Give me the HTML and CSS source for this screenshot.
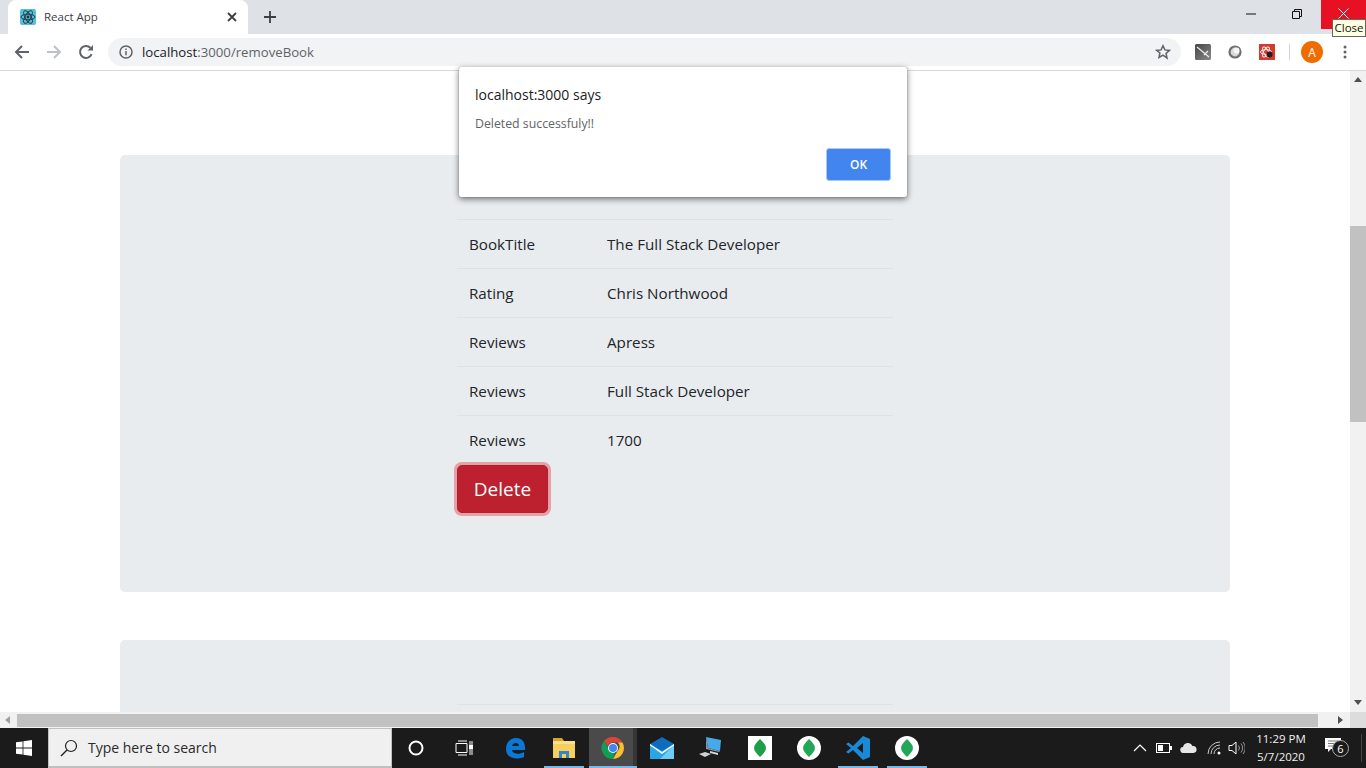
FILE: index.html
```html
<!DOCTYPE html>
<html lang="en">
  <head>
    <meta charset="UTF-8" />
    <title>React App</title>
    <link rel="stylesheet" href="styles.css">
  </head>
  <body>
    <div class="tabstrip">
      <div class="tab">
        <svg class="favicon" width="16" height="16" viewBox="0 0 16 16">
          <rect width="16" height="16" rx="2" fill="#53c1de"/>
          <g fill="none" stroke="#24323a" stroke-width="0.9">
            <ellipse cx="8" cy="8" rx="7" ry="2.8"/>
            <ellipse cx="8" cy="8" rx="7" ry="2.8" transform="rotate(60 8 8)"/>
            <ellipse cx="8" cy="8" rx="7" ry="2.8" transform="rotate(120 8 8)"/>
          </g>
          <circle cx="8" cy="8" r="1.4" fill="#24323a"/>
        </svg>
        <span class="tab-title">React App</span>
        <svg class="tab-close" width="10" height="10" viewBox="0 0 10 10"><path d="M1 1l8 8M9 1l-8 8" stroke="#3c4043" stroke-width="1.8"/></svg>
      </div>
      <svg class="new-tab" width="12" height="12" viewBox="0 0 12 12"><path d="M6 0v12M0 6h12" stroke="#3c4043" stroke-width="1.8"/></svg>
      <div class="win-controls">
        <div class="win-btn"><svg width="10" height="10" viewBox="0 0 10 10"><path d="M0 5h10" stroke="#111" stroke-width="1"/></svg></div>
        <div class="win-btn"><svg width="10" height="10" viewBox="0 0 10 10"><path d="M.5 2.5h7v7h-7zM2.500 2.500v-2h7v7h-2" fill="none" stroke="#111" stroke-width="1"/></svg></div>
        <div class="win-btn win-close"><svg width="11" height="11" viewBox="0 0 11 11"><path d="M.5.5l10 10M10.500.5l-10 10" stroke="#fff" stroke-width="1"/></svg></div>
      </div>
    </div>

    <div class="toolbar">
      <svg class="nav-icon" width="16" height="16" viewBox="0 0 16 16"><path d="M15 8H2M8 2L2 8l6 6" fill="none" stroke="#5f6368" stroke-width="2"/></svg>
      <svg class="nav-icon" width="16" height="16" viewBox="0 0 16 16"><path d="M1 8h13M8 2l6 6-6 6" fill="none" stroke="#bdc1c6" stroke-width="2"/></svg>
      <svg class="nav-icon" width="16" height="16" viewBox="0 0 16 16"><path d="M13.600 10.200A6 6 0 1 1 12.400 3.800" fill="none" stroke="#5f6368" stroke-width="2"/><path d="M9.500 6.500H15V1z" fill="#5f6368"/></svg>
      <div class="omnibox">
        <svg width="14" height="14" viewBox="0 0 14 14"><circle cx="7" cy="7" r="6" fill="none" stroke="#5f6368" stroke-width="1.5"/><path d="M7 6v4.200M7 3.400v1.500" stroke="#5f6368" stroke-width="1.5"/></svg>
        <span class="url"><span class="url-host">localhost</span>:3000/removeBook</span>
        <svg class="star" width="16" height="16" viewBox="0 0 16 16"><path d="M8 1.800l1.900 4.100 4.500.5-3.300 3.100.9 4.500L8 11.200l-4 2.300.9-4.500L1.600 6.400l4.500-.5z" fill="none" stroke="#5f6368" stroke-width="1.5"/></svg>
      </div>
      <div class="extensions">
        <svg width="16" height="16" viewBox="0 0 16 16">
          <defs><linearGradient id="ext-grey" x1="0" y1="0" x2="1" y2="1"><stop offset="0" stop-color="#444"/><stop offset="1" stop-color="#8a8a8a"/></linearGradient></defs>
          <rect width="16" height="16" rx="1.500" fill="url(#ext-grey)"/><path d="M2 3l12 10M9 11l4-4" stroke="#eee" stroke-width="1.200"/>
        </svg>
        <svg width="16" height="16" viewBox="0 0 16 16"><circle cx="8" cy="8" r="5.500" fill="#d8d8d8" stroke="#707070" stroke-width="2.200"/><circle cx="9.500" cy="6.500" r="3" fill="#f6f6f6"/></svg>
        <svg width="16" height="16" viewBox="0 0 16 16"><rect width="16" height="16" fill="#d5392f"/><g fill="none" stroke="#fbe3e0"><ellipse cx="7" cy="8" rx="5.500" ry="2.400"/><ellipse cx="7" cy="8" rx="5.500" ry="2.400" transform="rotate(60 7 8)"/><ellipse cx="7" cy="8" rx="5.500" ry="2.400" transform="rotate(120 7 8)"/></g><circle cx="10.500" cy="10.500" r="3" fill="#2b1a18"/></svg>
      </div>
      <div class="tb-sep"></div>
      <div class="avatar">A</div>
      <svg class="kebab" width="4" height="14" viewBox="0 0 4 14"><circle cx="2" cy="2" r="1.500" fill="#5f6368"/><circle cx="2" cy="7" r="1.500" fill="#5f6368"/><circle cx="2" cy="12" r="1.500" fill="#5f6368"/></svg>
    </div>

    <div class="viewport">
      <div class="page">
        <div class="jumbotron">
          <table class="book-table">
            <tr><td class="key">BookTitle</td><td>The Full Stack Developer</td></tr>
            <tr><td class="key">Rating</td><td>Chris Northwood</td></tr>
            <tr><td class="key">Reviews</td><td>Apress</td></tr>
            <tr><td class="key">Reviews</td><td>Full Stack Developer</td></tr>
            <tr><td class="key">Reviews</td><td>1700</td></tr>
          </table>
          <button class="btn-delete">Delete</button>
        </div>
        <div class="jumbotron">
          <table class="book-table">
            <tr><td class="key"></td><td></td></tr>
          </table>
        </div>
      </div>
      <div class="vscroll">
        <div class="arrow"></div>
        <div class="vtrack"><div class="vthumb"></div></div>
        <div class="arrow arrow-down"></div>
      </div>
    </div>

    <div class="hscroll">
      <div class="harrow"><div class="arrow-left"></div></div>
      <div class="hthumb"></div>
      <div class="harrow harrow-right"><div class="arrow-right"></div></div>
      <div class="corner"></div>
    </div>

    <div class="taskbar">
      <div class="start">
        <svg width="16" height="16" viewBox="0 0 16 16"><path d="M0 2.300l6.600-.9v6.200H0zM7.400 1.300L16 0v7.600H7.400zM0 8.400h6.600v6.200L0 13.700zM7.400 8.400H16V16l-8.600-1.300z" fill="#fff"/></svg>
      </div>
      <div class="search">
        <svg width="18" height="18" viewBox="0 0 18 18"><circle cx="11" cy="7" r="5.500" fill="none" stroke="#222" stroke-width="1.200"/><path d="M7 11l-6 6" stroke="#222" stroke-width="1.400"/></svg>
        <span>Type here to search</span>
      </div>
      <div class="sys-btn"><svg width="16" height="16" viewBox="0 0 16 16"><circle cx="8" cy="8" r="6.500" fill="none" stroke="#fff" stroke-width="2"/></svg></div>
      <div class="sys-btn"><svg width="18" height="16" viewBox="0 0 18 16"><path d="M1 3.500h11v9H1zM3 1h9M3 15h9M15 1v14M17 1v14" fill="none" stroke="#fff" stroke-width="1"/><rect x="14" y="5" width="4" height="4" fill="#fff"/></svg></div>
      <div class="apps">
        <div class="app">
          <svg width="24" height="24" viewBox="0 0 24 24"><path d="M3 13C3 6 8 2 13 2c6 0 9 4 9 10v2H9c.4 4 7 5 12 2v5c-7 3-18 2-18-8zm6-3h7c0-4-6-4-7 0z" fill="#0a78d7"/></svg>
        </div>
        <div class="app app-open">
          <svg width="24" height="24" viewBox="0 0 24 24"><path d="M1 2h9l2 3h-11z" fill="#d9a232"/><rect x="1" y="5" width="22" height="17" fill="#f6cf5f"/><rect x="1" y="5" width="22" height="3" fill="#fbe08a"/><path d="M7 22v-7h10v7h-3v-4h-4v4z" fill="#2f86c9"/></svg>
        </div>
        <div class="app app-open app-active">
          <svg width="24" height="24" viewBox="0 0 24 24">
            <path d="M12 1a11 11 0 0 1 9.500 5.500H12a5.500 5.500 0 0 0-5.200 3.700L3.200 4.800A11 11 0 0 1 12 1z" fill="#db4437"/>
            <path d="M21.500 6.500A11 11 0 0 1 12 23l4.700-8.200a5.500 5.500 0 0 0 .1-8.300z" fill="#fbc02d"/>
            <path d="M12 23A11 11 0 0 1 3.200 4.800l4.600 8.100a5.500 5.500 0 0 0 6.300 4.200z" fill="#0f9d58"/>
            <circle cx="12" cy="12" r="5" fill="#fff"/><circle cx="12" cy="12" r="4" fill="#4285f4"/>
          </svg>
        </div>
        <div class="app">
          <svg width="24" height="24" viewBox="0 0 24 24"><rect y="8" width="24" height="15" fill="#2aa5ea"/><path d="M0 8l12-7 12 7-12 7z" fill="#0f6cbd"/><path d="M24 9v14H10z" fill="#6fcbf5"/><path d="M0 8l12 8 12-8v1.500L12 18 0 9.500z" fill="#fff"/></svg>
        </div>
        <div class="app">
          <svg width="24" height="24" viewBox="0 0 24 24"><path d="M7 1l15 3-1 11-12-3z" fill="#45a9ea"/><path d="M7 1l2 11 12 3-1 1-13-3z" fill="#8a949b"/><path d="M11 15l8 2v2l-8-2z" fill="#cfd8dc"/><path d="M0 18l6-2 6 2-6 3z" fill="#cfd2d4"/></svg>
        </div>
        <div class="app">
          <div class="mongo-tile"><svg width="12" height="18" viewBox="0 0 12 18"><path d="M6 0c3 3 6 6 6 9s-3 6-6 9c-3-3-6-6-6-9s3-6 6-9z" fill="#1f9e4a"/></svg></div>
        </div>
        <div class="app">
          <div class="mongo-tile mongo-round"><svg width="12" height="18" viewBox="0 0 12 18"><path d="M6 0c3 3 6 6 6 9s-3 6-6 9c-3-3-6-6-6-9s3-6 6-9z" fill="#21a757"/></svg></div>
        </div>
        <div class="app app-open">
          <svg width="24" height="24" viewBox="0 0 24 24"><path d="M17 0l7 3v18l-7 3L7 14l-4.500 3.500L0 16l5-4-5-4 2.500-1.500L7 10zm0 7l-6 5 6 5z" fill="#1b8ad6"/></svg>
        </div>
        <div class="app app-open">
          <div class="mongo-tile mongo-round"><svg width="12" height="18" viewBox="0 0 12 18"><path d="M6 0c3 3 6 6 6 9s-3 6-6 9c-3-3-6-6-6-9s3-6 6-9z" fill="#21a757"/></svg></div>
        </div>
      </div>
      <div class="tray">
        <svg class="tray-chevron" width="14" height="8" viewBox="0 0 14 8"><path d="M1 7l6-6 6 6" fill="none" stroke="#fff" stroke-width="1.200"/></svg>
        <svg class="tray-battery" width="16" height="10" viewBox="0 0 16 10"><rect x=".5" y=".5" width="13" height="9" fill="none" stroke="#fff"/><rect x="2" y="2" width="5" height="6" fill="#fff"/><rect x="14" y="3" width="2" height="4" fill="#fff"/></svg>
        <svg class="tray-cloud" width="17" height="10" viewBox="0 0 17 10"><path d="M3.500 10a3 3 0 0 1-.5-6 5 5 0 0 1 9.500-1 3.500 3.500 0 0 1 1 7z" fill="#e6e6e6"/></svg>
        <svg class="tray-wifi" width="15" height="14" viewBox="0 0 15 14"><path d="M1 13A12 12 0 0 1 13 1M4 13a9 9 0 0 1 9-9M7 13a6 6 0 0 1 6-6" fill="none" stroke="#ccc" stroke-width="1"/><circle cx="12" cy="12" r="1.500" fill="#fff"/></svg>
        <svg class="tray-sound" width="17" height="14" viewBox="0 0 17 14"><path d="M1 4.500h3L8 1v12L4 9.500H1z" fill="none" stroke="#fff"/><path d="M10.500 4.500a4 4 0 0 1 0 5M13 2.500a7 7 0 0 1 0 9M15 1a9 9 0 0 1 0 12" fill="none" stroke="#999"/></svg>
        <div class="clock"><div>11:29 PM</div><div>5/7/2020</div></div>
        <div class="notify">
          <svg width="16" height="14" viewBox="0 0 16 14"><path d="M0 0h16v11H6l-3 3v-3H0z" fill="#fff"/><path d="M3 3h10M3 5.500h10M3 8h6" stroke="#777"/></svg>
          <span class="notify-badge">6</span>
        </div>
      </div>
    </div>

    <div class="tooltip">Close</div>

    <div class="alert">
      <div class="alert-title">localhost:3000 says</div>
      <div class="alert-msg">Deleted successfuly!!</div>
      <div class="alert-actions"><button class="alert-ok">OK</button></div>
    </div>
  </body>
</html>
```

FILE: styles.css
```css
* {
  box-sizing: border-box;
}
html,
body {
  margin: 0;
  height: 768px;
  overflow: hidden;
}
body {
  display: flex;
  flex-direction: column;
  background: #fff;
  font-family: "Open Sans", "Noto Sans", sans-serif;
  color: #212529;
}

/* browser chrome */
.tabstrip {
  height: 34px;
  flex: none;
  display: flex;
  align-items: flex-end;
  background: #dee1e6;
  padding-left: 8px;
}
.tab {
  width: 240px;
  height: 34px;
  display: flex;
  align-items: center;
  padding: 0 12px;
  background: #fff;
  border-radius: 8px 8px 0 0;
}
.tab-title {
  margin-left: 8px;
  margin-bottom: 2px;
  flex: 1;
  font-size: 11.5px;
  color: #3c4043;
}
.tab-close {
  margin-right: -1px;
}
.new-tab {
  margin: 0 0 11px 16px;
}
.win-controls {
  margin-left: auto;
  align-self: flex-start;
  display: flex;
}
.win-btn {
  width: 46px;
  height: 29px;
  display: flex;
  align-items: center;
  justify-content: center;
  padding: 0 2px 2px 0;
}
.win-close {
  width: 45px;
  padding-right: 0;
  background: #e81123;
}
.toolbar {
  height: 37px;
  flex: none;
  display: flex;
  align-items: center;
  padding-left: 14px;
  background: #fff;
  border-bottom: 1px solid #d6d8db;
}
.nav-icon {
  margin-right: 16px;
}
.omnibox {
  width: 1073px;
  height: 28px;
  margin-left: -2px;
  display: flex;
  align-items: center;
  padding: 0 10px 0 11px;
  background: #f1f3f4;
  border-radius: 14px;
}
.url {
  margin-left: 9px;
  flex: 1;
  font-size: 13.2px;
  color: #5f6368;
}
.url-host {
  color: #202124;
}
.extensions {
  display: flex;
  gap: 16px;
  margin-left: 14px;
}
.tb-sep {
  width: 1px;
  height: 16px;
  margin: 0 11px 0 14px;
  background: #d0d2d5;
}
.avatar {
  width: 22px;
  height: 22px;
  display: flex;
  align-items: center;
  justify-content: center;
  border-radius: 50%;
  background: #ef6c00;
  color: #fff;
  font-size: 12px;
}
.kebab {
  margin-left: 20px;
}

/* page */
.viewport {
  height: 641px;
  flex: none;
  display: flex;
}
.page {
  flex: 1;
  overflow: hidden;
  padding: 84px 120px 0;
}
.jumbotron {
  width: 1110px;
  height: 437px;
  padding: 64px 0 64px 337px;
  margin-bottom: 48px;
  background: #e9ecef;
  border-radius: 5px;
}
.book-table {
  width: 436px;
  border-collapse: collapse;
  font-size: 15.2px;
}
.book-table td {
  height: 49px;
  padding: 12px;
  line-height: 24px;
  border-top: 1px solid #dee2e6;
}
.book-table .key {
  width: 138px;
}
.btn-delete {
  display: block;
  width: 91px;
  height: 48px;
  padding: 0;
  border: 1px solid #b21f2d;
  border-radius: 5px;
  background: #bd2130;
  color: #fff;
  font-family: inherit;
  font-size: 19px;
  box-shadow: 0 0 0 3px rgba(225, 83, 97, 0.5);
}
.vscroll {
  width: 16px;
  display: flex;
  flex-direction: column;
  background: #f1f1f1;
}
.arrow {
  flex: none;
  width: 0;
  height: 0;
  margin: 6px 4px;
  border: 4px solid transparent;
  border-top: 0;
  border-bottom: 5px solid #505050;
}
.arrow-down {
  margin-bottom: 7px;
  transform: rotate(180deg);
}
.vtrack {
  flex: 1;
  padding-top: 138px;
}
.vthumb {
  height: 196px;
  background: #c1c1c1;
}
.hscroll {
  height: 16px;
  flex: none;
  display: flex;
  align-items: center;
  background: #f1f1f1;
}
.harrow {
  width: 17px;
  padding-right: 2px;
  display: flex;
  justify-content: center;
}
.harrow-right {
  margin-left: 15px;
}
.arrow-left,
.arrow-right {
  width: 0;
  height: 0;
  border: 4px solid transparent;
  border-left: 0;
  border-right: 5px solid #a0a0a0;
}
.arrow-right {
  border-right: 0;
  border-left: 5px solid #505050;
}
.hthumb {
  width: 1301px;
  height: 13px;
  background: #c1c1c1;
}
.corner {
  width: 16px;
  height: 16px;
  margin-left: auto;
  background: #dcdcdc;
}

/* windows taskbar */
.taskbar {
  height: 40px;
  flex: none;
  display: flex;
  align-items: center;
  background: #1b1b1b;
  color: #fff;
}
.start {
  width: 48px;
  display: flex;
  justify-content: center;
}
.search {
  width: 344px;
  height: 40px;
  display: flex;
  align-items: center;
  gap: 10px;
  padding-left: 11px;
  background: #f0f0f0;
  border: 1px solid #c0c0c0;
  border-bottom-width: 2px;
  font-size: 14px;
  color: #2a2a2a;
}
.sys-btn {
  width: 48px;
  display: flex;
  justify-content: center;
}
.apps {
  display: flex;
  margin-left: 2px;
}
.app {
  width: 49px;
  height: 40px;
  display: flex;
  align-items: center;
  justify-content: center;
  position: relative;
}
.app-open::after {
  content: "";
  position: absolute;
  left: 5px;
  right: 4px;
  bottom: 0;
  height: 2px;
  background: #76b9ed;
}
.app-active {
  background: linear-gradient(to right, #1b1b1b 1px, #4a4a4a 1px, #4a4a4a 45px, #363636 45px);
}
.app-active::after {
  left: 1px;
  right: 0;
}
.mongo-tile {
  width: 24px;
  height: 24px;
  display: flex;
  align-items: center;
  justify-content: center;
  background: #fff;
}
.mongo-round {
  border-radius: 50%;
}
.tray {
  margin-left: auto;
  display: flex;
  align-items: center;
}
.tray-battery {
  margin-left: 9px;
}
.tray-cloud {
  margin-left: 8px;
}
.tray-wifi {
  margin-left: 10px;
}
.tray-sound {
  margin-left: 6px;
}
.clock {
  width: 72px;
  text-align: center;
  font-size: 11.5px;
  line-height: 18px;
  color: #f0f0f0;
}
.notify {
  width: 37px;
  height: 28px;
  margin: 0 4px 0 8px;
  padding-top: 1px;
  position: relative;
  border-right: 1px solid #444;
}
.notify-badge {
  position: absolute;
  left: 7px;
  top: 6px;
  width: 17px;
  height: 17px;
  border: 1px solid #aaa;
  border-radius: 50%;
  background: #1b1b1b;
  font-size: 11px;
  line-height: 15px;
  text-align: center;
}

/* overlays */
.tooltip {
  position: absolute;
  left: 1332px;
  top: 19px;
  width: 34px;
  height: 18px;
  background: #ffffe1;
  border: 1px solid #646464;
  font-size: 11.5px;
  line-height: 15px;
  text-align: center;
  color: #111;
}
.alert {
  position: absolute;
  left: 459px;
  top: 67px;
  width: 448px;
  height: 130px;
  padding: 18px 16px 16px;
  background: #fff;
  border-radius: 2px;
  box-shadow: 0 0 1px rgba(0, 0, 0, 0.5), 0 2px 6px rgba(0, 0, 0, 0.55);
}
.alert-title {
  font-size: 14px;
  line-height: 20px;
  color: #202124;
}
.alert-msg {
  margin-top: 11px;
  font-size: 12.3px;
  line-height: 16px;
  color: #5f6368;
}
.alert-actions {
  display: flex;
  justify-content: flex-end;
  margin-top: 16px;
}
.alert-ok {
  width: 65px;
  height: 33px;
  padding: 0;
  border: 1px solid #a9c9f5;
  border-radius: 3px;
  background: #4285ee;
  color: #fff;
  font-family: inherit;
  font-size: 12px;
  font-weight: 600;
}
```
